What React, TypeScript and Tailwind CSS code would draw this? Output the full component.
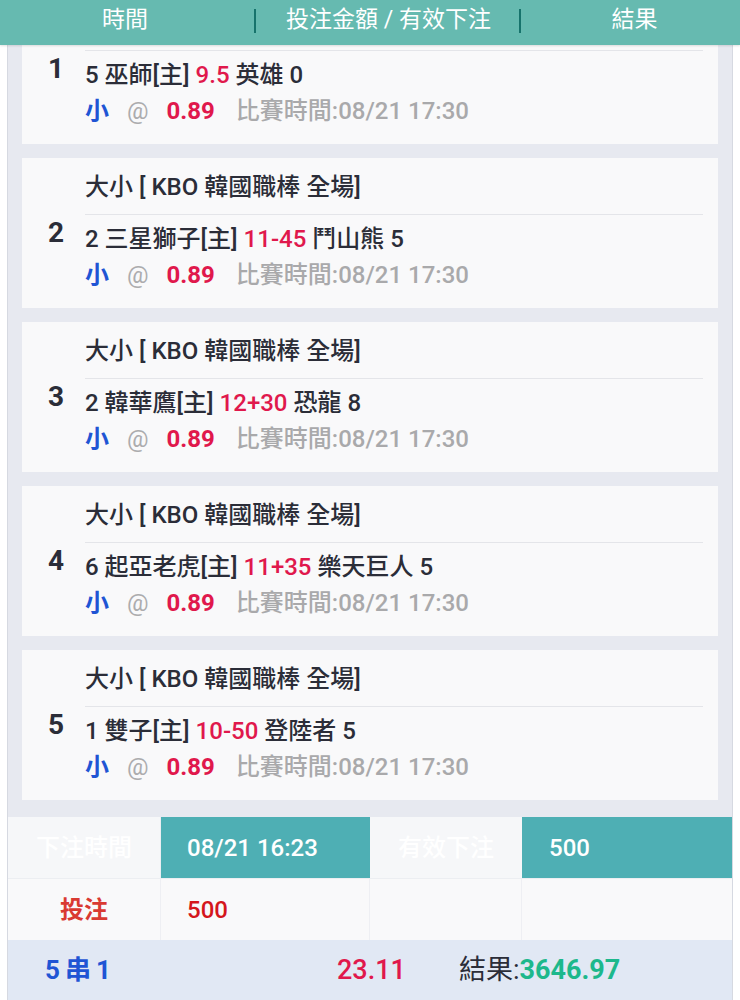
import React from "react";

type Bet = {
  idx: number;
  home: string;
  line: string;
  away: string;
};

const bets: Bet[] = [
  { idx: 1, home: "5 巫師[主]", line: "9.5", away: "英雄 0" },
  { idx: 2, home: "2 三星獅子[主]", line: "11-45", away: "鬥山熊 5" },
  { idx: 3, home: "2 韓華鷹[主]", line: "12+30", away: "恐龍 8" },
  { idx: 4, home: "6 起亞老虎[主]", line: "11+35", away: "樂天巨人 5" },
  { idx: 5, home: "1 雙子[主]", line: "10-50", away: "登陸者 5" },
];

const font = {
  fontFamily: '"Roboto", "Noto Sans CJK TC", "Noto Sans", sans-serif',
};

function Card({ bet, hideTitle }: { bet: Bet; hideTitle?: boolean }) {
  return (
    <div className="flex items-center bg-[#f9f9fa] h-[150px]">
      <div className="w-[63px] shrink-0 pl-[26px] text-[28px] font-bold text-[#2b2d38] leading-none">
        {bet.idx}
      </div>
      <div className="flex-1 pr-[15px] h-full flex flex-col pt-[12px]">
        <div className="h-[34px] flex items-center text-[24px] font-medium text-[#2b2d38] border-b border-[#e4e5e9] box-content pb-[10px]">
          {hideTitle ? "" : "大小 [ KBO 韓國職棒 全場]"}
        </div>
        <div className="pt-[6px] h-[36px] box-content flex items-center text-[24px] font-medium text-[#2b2d38] whitespace-pre">
          <span>{bet.home} </span>
          <span className="text-[#e0184c]">{bet.line}</span>
          <span> {bet.away}</span>
        </div>
        <div className="h-[36px] flex items-center text-[24px]">
          <span className="text-[#1f55d4] font-bold">小</span>
          <span className="ml-[18px] text-[#acacae]">@</span>
          <span className="ml-[18px] text-[#e0184c] font-bold">0.89</span>
          <span className="ml-[21px] text-[#a9a9ab] font-medium">比賽時間:08/21 17:30</span>
        </div>
      </div>
    </div>
  );
}

export default function App() {
  return (
    <div className="w-[740px] h-[1000px] overflow-hidden bg-white flex flex-col" style={font}>
      <div className="relative z-10 shrink-0 w-[740px] h-[45px] bg-[#66bab0] flex items-center pb-[4px] text-[23px] text-white shadow-[0_1px_2px_rgba(0,0,0,0.12)]">
        <div className="w-[250px] text-center">時間</div>
        <div className="ml-[4px] w-[2px] h-[24px] bg-[#17736c]" />
        <div className="ml-[30px]">投注金額 / 有效下注</div>
        <div className="ml-[28px] w-[2px] h-[24px] bg-[#17736c]" />
        <div className="flex-1 text-center pl-[8px]">結果</div>
      </div>

      <div className="flex-1 overflow-hidden">
        <div className="ml-[7px] w-[726px] border-x border-[#d6d9e1] bg-[#e7e9f0] -mt-[51px]">
          <div className="px-[14px] pb-[17px] flex flex-col gap-[14px]">
            {bets.map((b) => (
              <Card key={b.idx} bet={b} hideTitle={b.idx === 1} />
            ))}
          </div>
          <div className="flex flex-col">
            <div className="flex h-[61px] text-[24px] font-medium text-white">
              <div className="w-[153px] bg-[#f6f7f9] flex items-center justify-center border-r border-[#eceef2]">
                下注時間
              </div>
              <div className="w-[209px] bg-[#4eafb4] flex items-center pl-[26px]">
                08/21 16:23
              </div>
              <div className="w-[152px] bg-[#f6f7f9] flex items-center justify-center">
                有效下注
              </div>
              <div className="flex-1 bg-[#4eafb4] flex items-center pl-[27px]">500</div>
            </div>
            <div className="flex h-[62px] text-[24px] bg-[#f9f9fa] border-t border-[#eceef2]">
              <div className="w-[153px] flex items-center justify-center border-r border-[#eeeff3] text-[#d93a32] font-bold">
                投注
              </div>
              <div className="w-[209px] flex items-center pl-[26px] border-r border-[#eeeff3] text-[#d4161c] font-medium">
                500
              </div>
              <div className="w-[152px] border-r border-[#eeeff3]" />
              <div className="flex-1" />
            </div>
            <div className="flex items-center h-[64px] bg-[#e1e8f4] pb-[4px]">
              <div className="w-[329px] pl-[37px] text-[26px] font-bold text-[#1f55d4] tracking-[5px]">
                5串1
              </div>
              <div className="text-[27px] font-medium text-[#e0184c]">23.11</div>
              <div className="ml-[53px] text-[27px] text-[#2b2d38]">
                結果:<span className="font-bold text-[#1db88c]">3646.97</span>
              </div>
            </div>
          </div>
        </div>
      </div>
    </div>
  );
}
